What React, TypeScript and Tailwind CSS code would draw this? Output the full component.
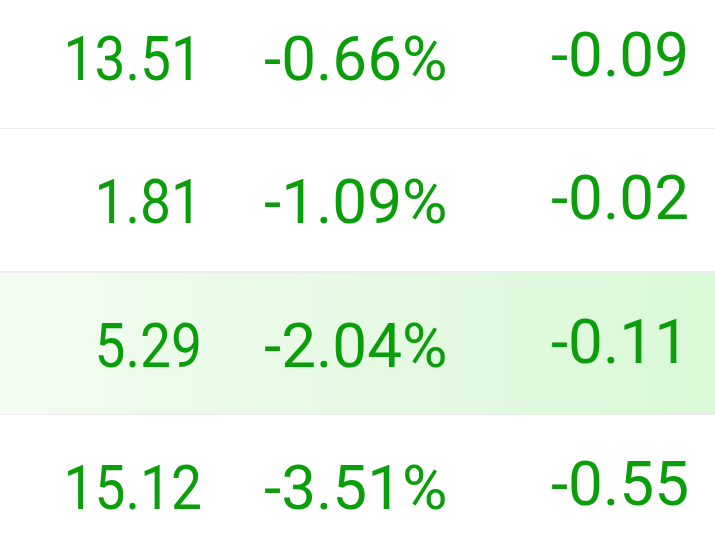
const rows = [
  { price: '13.51', pct: '-0.66%', change: '-0.09', active: false },
  { price: '1.81', pct: '-1.09%', change: '-0.02', active: false },
  { price: '5.29', pct: '-2.04%', change: '-0.11', active: true },
  { price: '15.12', pct: '-3.51%', change: '-0.55', active: false },
];

const QuoteList = () => {
  return (
    <div className="w-[715px] h-[548px] overflow-hidden bg-white font-['Roboto',sans-serif]">
      <div className="-mt-[14px]">
        {rows.map((row) => (
          <div
            key={row.price}
            className={
              row.active
                ? 'h-[143px] flex items-center border-y border-[#ececec] bg-gradient-to-r from-[#f3fcf1] to-[#d9f8d6]'
                : 'h-[143px] flex items-center border-b border-[#ececec]'
            }
          >
            <div className="w-[202px] text-right text-[62px] leading-none text-[#0b9e0b] pt-[4px] scale-x-[0.89] origin-right">
              {row.price}
            </div>
            <div className="ml-[62px] text-[62px] leading-none text-[#0b9e0b] pt-[4px]">{row.pct}</div>
            <div className="flex-1 pr-[26px] text-right text-[62px] leading-none text-[#0b9e0b] pb-[4px]">
              {row.change}
            </div>
          </div>
        ))}
      </div>
    </div>
  );
};

export default QuoteList;
